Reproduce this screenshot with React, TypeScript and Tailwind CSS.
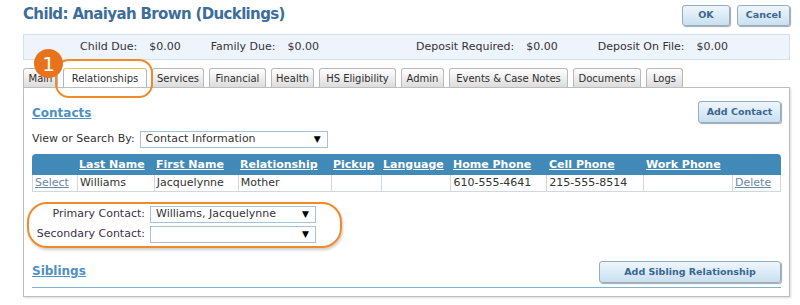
import React from 'react';

const font = { fontFamily: '"DejaVu Sans", Verdana, sans-serif' };

const Btn = ({ label, className = '' }: { label: string; className?: string }) => (
  <div
    className={`flex items-center justify-center rounded-[3px] border border-[#93aec4] bg-gradient-to-b from-[#eef6fc] to-[#c9e0f0] text-[9.5px] font-bold text-[#3b6690] shadow-[1px_1px_1px_rgba(0,0,0,0.35)] ${className}`}
  >
    {label}
  </div>
);

const Dropdown = ({ value, className = '' }: { value: string; className?: string }) => (
  <div className={`flex h-[17px] items-center justify-between border border-[#a9c2d8] bg-white pl-[5px] pr-[6px] text-[11px] text-[#333] ${className}`}>
    <span>{value}</span>
    <span className="text-[9px] text-black">▼</span>
  </div>
);

const tabs = [
  { name: 'Main', w: 35 },
  { name: 'Relationships', w: 84, active: true },
  { name: 'Services', w: 52 },
  { name: 'Financial', w: 57 },
  { name: 'Health', w: 43 },
  { name: 'HS Eligibility', w: 77 },
  { name: 'Admin', w: 43 },
  { name: 'Events & Case Notes', w: 119 },
  { name: 'Documents', w: 68 },
  { name: 'Logs', w: 37 },
];

const cols = [
  { h: '', w: 45 },
  { h: 'Last Name', w: 77 },
  { h: 'First Name', w: 84 },
  { h: 'Relationship', w: 93 },
  { h: 'Pickup', w: 50 },
  { h: 'Language', w: 70 },
  { h: 'Home Phone', w: 96 },
  { h: 'Cell Phone', w: 97 },
  { h: 'Work Phone', w: 89 },
  { h: '', w: 48 },
];

const row = ['Select', 'Williams', 'Jacquelynne', 'Mother', '', '', '610-555-4641', '215-555-8514', '', 'Delete'];

export default function App() {
  return (
    <div className="relative h-[305px] w-[800px] overflow-hidden bg-white" style={font}>
      {/* Header */}
      <div className="flex items-start justify-between pl-[23px] pr-[10px] pt-[3px]">
        <div className="text-[15px] font-bold leading-[22px] tracking-[-0.65px] text-[#3c6d9b]">Child: Anaiyah Brown (Ducklings)</div>
        <div className="mt-[2px] flex gap-[7px]">
          <Btn label="OK" className="h-[21px] w-[48px]" />
          <Btn label="Cancel" className="h-[21px] w-[53px] border-[#6d9cc6]" />
        </div>
      </div>

      {/* Summary bar */}
      <div className="ml-[23px] mr-[10px] mt-[8px] flex h-[26px] items-center border border-[#d3e0f0] bg-[#eef4fc] text-[11px] text-[#333]">
        <span className="ml-[56px]">Child Due:</span>
        <span className="ml-[12px]">$0.00</span>
        <span className="ml-[30px]">Family Due:</span>
        <span className="ml-[12px]">$0.00</span>
        <span className="ml-[97px]">Deposit Required:</span>
        <span className="ml-[12px]">$0.00</span>
        <span className="ml-[40px]">Deposit On File:</span>
        <span className="ml-[12px]">$0.00</span>
      </div>

      {/* Tabs */}
      <div className="ml-[23px] mt-[8px] flex h-[19px] items-end gap-[5px]">
        {tabs.map((t) => (
          <div
            key={t.name}
            style={{ width: t.w }}
            className={`flex h-[19px] items-center justify-center whitespace-nowrap rounded-t-[3px] border border-b-0 text-[10px] text-[#2e2e2e] ${
              t.active
                ? 'border-[#b5b5b5] border-t-[#e8c45a] bg-white'
                : 'border-[#b9b9b9] bg-gradient-to-b from-[#ffffff] to-[#dcdcdc]'
            }`}
          >
            {t.name}
          </div>
        ))}
      </div>

      {/* Panel */}
      <div className="ml-[23px] mr-[10px] h-[210px] border border-[#bdbdbd] px-[8px] shadow-[1px_1px_2px_rgba(0,0,0,0.15)]">
        <div className="mt-[13px] flex items-start justify-between">
          <div className="mt-[3px] text-[12px] font-bold text-[#4f90c4] underline">Contacts</div>
          <Btn label="Add Contact" className="h-[22px] w-[83px]" />
        </div>

        <div className="mt-[8px] flex items-center gap-[5px] text-[11px] text-[#333]">
          <span>View or Search By:</span>
          <Dropdown value="Contact Information" className="w-[188px]" />
        </div>

        {/* Table */}
        <div className="mt-[6px] w-[749px] text-[11px]">
          <div className="flex h-[21px] items-end rounded-t-[4px] bg-[#4189b7] pb-[2px]">
            {cols.map((c, i) => (
              <div key={i} style={{ width: c.w }} className="pl-[2px] font-bold text-white underline">
                {c.h}
              </div>
            ))}
          </div>
          <div className="flex h-[17px] border-b border-l border-[#cfd8e0]">
            {row.map((v, i) => (
              <div
                key={i}
                style={{ width: cols[i].w }}
                className={`flex border-r border-[#cfd8e0] pl-[2px] ${
                  v === 'Select' || v === 'Delete' ? 'items-end text-[#6a87a4] underline' : 'items-center text-[#333]'
                }`}
              >
                {v}
              </div>
            ))}
          </div>
        </div>

        {/* Contacts select */}
        <div className="mt-[14px] flex flex-col gap-[3px] text-[11px] text-[#3d3048]">
          <div className="flex items-center">
            <span className="w-[113px] text-right">Primary Contact:</span>
            <Dropdown value="Williams, Jacquelynne" className="ml-[5px] w-[166px]" />
          </div>
          <div className="flex items-center">
            <span className="w-[113px] text-right">Secondary Contact:</span>
            <Dropdown value="" className="ml-[5px] w-[166px]" />
          </div>
        </div>

        <div className="mt-[18px] flex items-end justify-between border-b border-[#7fb3d6] pb-[4px]">
          <div className="mb-[3px] text-[12px] font-bold text-[#4f90c4] underline">Siblings</div>
          <Btn label="Add Sibling Relationship" className="h-[22px] w-[182px]" />
        </div>
      </div>

      {/* Annotations */}
      <div className="absolute left-[55px] top-[59px] h-[39px] w-[98px] rounded-[14px] border-2 border-[#f0892a]" />
      <div className="absolute left-[34px] top-[49px] flex h-[29px] w-[29px] items-center justify-center rounded-full bg-[#e8731c] text-[20px] text-white">
        1
      </div>
      <div className="absolute left-[27px] top-[202px] h-[46px] w-[315px] rounded-[20px] border-2 border-[#f0892a] shadow-[1px_2px_3px_rgba(0,0,0,0.2)]" />
    </div>
  );
}
